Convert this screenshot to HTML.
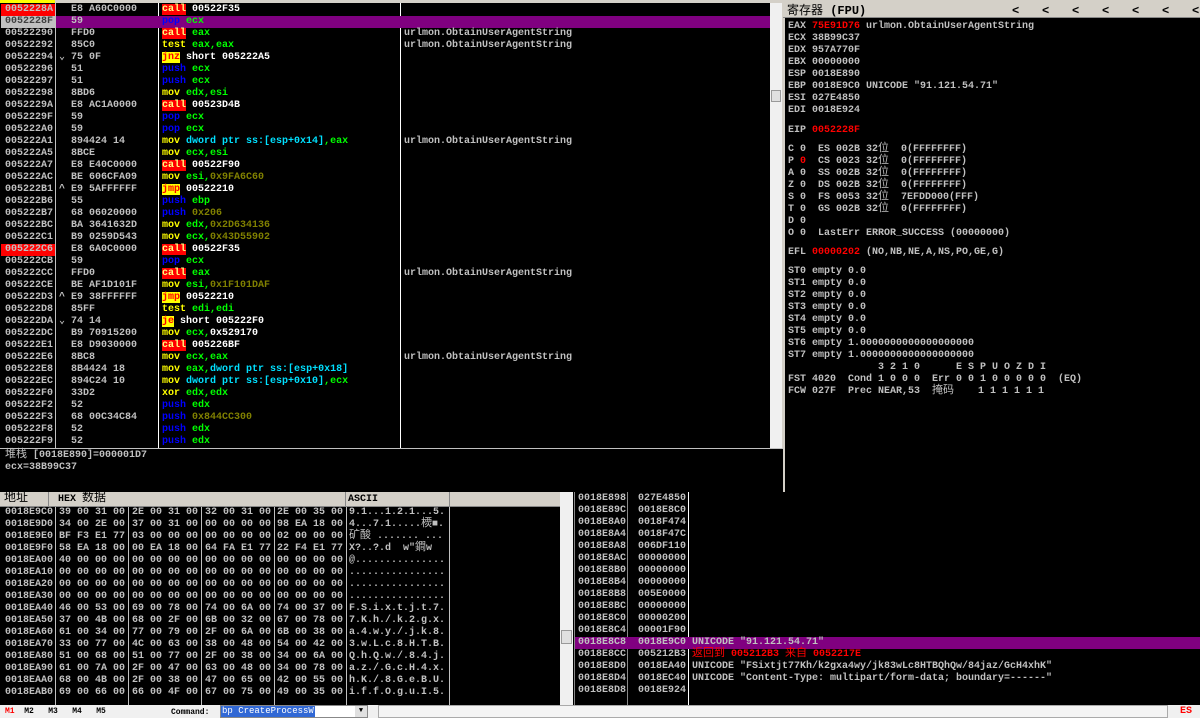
<!DOCTYPE html>
<html><head><meta charset="utf-8"><style>
*{margin:0;padding:0;box-sizing:border-box}
body{width:1200px;height:718px;background:#d4d0c8;position:relative;overflow:hidden;font-family:"Liberation Mono","Noto Sans CJK SC",monospace;font-size:10px;font-weight:bold;color:#c0c0c0}
.a{position:absolute}
.blk{background:#000}
.col{position:absolute;line-height:12px}
.col div{height:12px;white-space:pre;overflow:visible}
.c{background:#f00;color:#ffff80}
.j{background:#ff0;color:#f00}
.p{color:#0000ff}
.m{color:#ff0}
.r{color:#0f0}
.k{color:#808000}
.w{color:#fff}
.d{color:#00e0ff}
.red{color:#f00}
.vl{position:absolute;width:1px;background:#c0c0c0}
.cj{font-family:"Noto Sans CJK SC","WenQuanYi Zen Hei",sans-serif;font-weight:normal;line-height:0;font-size:11px}
.lt{position:absolute;top:4px;color:#000;font-size:12px;line-height:14px}
</style></head><body>
<div class="a" style="left:0;top:0;width:55px;height:3px;background:#ff0"></div>
<div class="a blk" style="left:0;top:3px;width:770px;height:446px"></div>
<div class="vl" style="left:55px;top:3px;height:446px"></div>
<div class="vl" style="left:158px;top:3px;height:446px;background:#fff"></div>
<div class="vl" style="left:400px;top:3px;height:446px;background:#fff"></div>
<div class="a" style="left:1px;top:4px;width:54px;height:12px;background:#f00"></div>
<div class="a" style="left:1px;top:16px;width:54px;height:12px;background:#c0c0c0"></div>
<div class="a" style="left:56px;top:16px;width:714px;height:12px;background:#800080"></div>
<div class="a" style="left:1px;top:244px;width:54px;height:12px;background:#f00"></div>
<div class="col" style="left:5px;top:4px"><div>0052228A</div><div style="color:#404040">0052228F</div><div>00522290</div><div>00522292</div><div>00522294</div><div>00522296</div><div>00522297</div><div>00522298</div><div>0052229A</div><div>0052229F</div><div>005222A0</div><div>005222A1</div><div>005222A5</div><div>005222A7</div><div>005222AC</div><div>005222B1</div><div>005222B6</div><div>005222B7</div><div>005222BC</div><div>005222C1</div><div>005222C6</div><div>005222CB</div><div>005222CC</div><div>005222CE</div><div>005222D3</div><div>005222D8</div><div>005222DA</div><div>005222DC</div><div>005222E1</div><div>005222E6</div><div>005222E8</div><div>005222EC</div><div>005222F0</div><div>005222F2</div><div>005222F3</div><div>005222F8</div><div>005222F9</div></div>
<div class="col" style="left:59px;top:4px"><div> </div><div> </div><div> </div><div> </div><div>⌄</div><div> </div><div> </div><div> </div><div> </div><div> </div><div> </div><div> </div><div> </div><div> </div><div> </div><div>^</div><div> </div><div> </div><div> </div><div> </div><div> </div><div> </div><div> </div><div> </div><div>^</div><div> </div><div>⌄</div></div>
<div class="col" style="left:71px;top:4px"><div>E8 A60C0000</div><div>59</div><div>FFD0</div><div>85C0</div><div>75 0F</div><div>51</div><div>51</div><div>8BD6</div><div>E8 AC1A0000</div><div>59</div><div>59</div><div>894424 14</div><div>8BCE</div><div>E8 E40C0000</div><div>BE 606CFA09</div><div>E9 5AFFFFFF</div><div>55</div><div>68 06020000</div><div>BA 3641632D</div><div>B9 0259D543</div><div>E8 6A0C0000</div><div>59</div><div>FFD0</div><div>BE AF1D101F</div><div>E9 38FFFFFF</div><div>85FF</div><div>74 14</div><div>B9 70915200</div><div>E8 D9030000</div><div>8BC8</div><div>8B4424 18</div><div>894C24 10</div><div>33D2</div><div>52</div><div>68 00C34C84</div><div>52</div><div>52</div></div>
<div class="col" style="left:162px;top:4px"><div><span class="c">call</span> <span class="w">00522F35</span></div><div><span class="p">pop</span> <span class="r">ecx</span></div><div><span class="c">call</span> <span class="r">eax</span></div><div><span class="m">test</span> <span class="r">eax,eax</span></div><div><span class="j">jnz</span> <span class="w">short 005222A5</span></div><div><span class="p">push</span> <span class="r">ecx</span></div><div><span class="p">push</span> <span class="r">ecx</span></div><div><span class="m">mov</span> <span class="r">edx,esi</span></div><div><span class="c">call</span> <span class="w">00523D4B</span></div><div><span class="p">pop</span> <span class="r">ecx</span></div><div><span class="p">pop</span> <span class="r">ecx</span></div><div><span class="m">mov</span> <span class="d">dword ptr ss:[esp+0x14]</span><span class="r">,eax</span></div><div><span class="m">mov</span> <span class="r">ecx,esi</span></div><div><span class="c">call</span> <span class="w">00522F90</span></div><div><span class="m">mov</span> <span class="r">esi,</span><span class="k">0x9FA6C60</span></div><div><span class="j">jmp</span> <span class="w">00522210</span></div><div><span class="p">push</span> <span class="r">ebp</span></div><div><span class="p">push</span> <span class="k">0x206</span></div><div><span class="m">mov</span> <span class="r">edx,</span><span class="k">0x2D634136</span></div><div><span class="m">mov</span> <span class="r">ecx,</span><span class="k">0x43D55902</span></div><div><span class="c">call</span> <span class="w">00522F35</span></div><div><span class="p">pop</span> <span class="r">ecx</span></div><div><span class="c">call</span> <span class="r">eax</span></div><div><span class="m">mov</span> <span class="r">esi,</span><span class="k">0x1F101DAF</span></div><div><span class="j">jmp</span> <span class="w">00522210</span></div><div><span class="m">test</span> <span class="r">edi,edi</span></div><div><span class="j">je</span> <span class="w">short 005222F0</span></div><div><span class="m">mov</span> <span class="r">ecx,</span><span class="w">0x529170</span></div><div><span class="c">call</span> <span class="w">005226BF</span></div><div><span class="m">mov</span> <span class="r">ecx,eax</span></div><div><span class="m">mov</span> <span class="r">eax,</span><span class="d">dword ptr ss:[esp+0x18]</span></div><div><span class="m">mov</span> <span class="d">dword ptr ss:[esp+0x10]</span><span class="r">,ecx</span></div><div><span class="m">xor</span> <span class="r">edx,edx</span></div><div><span class="p">push</span> <span class="r">edx</span></div><div><span class="p">push</span> <span class="k">0x844CC300</span></div><div><span class="p">push</span> <span class="r">edx</span></div><div><span class="p">push</span> <span class="r">edx</span></div></div>
<div class="col" style="left:404px;top:28px"><div>urlmon.ObtainUserAgentString</div><div>urlmon.ObtainUserAgentString</div></div>
<div class="col" style="left:404px;top:136px"><div>urlmon.ObtainUserAgentString</div></div>
<div class="col" style="left:404px;top:268px"><div>urlmon.ObtainUserAgentString</div></div>
<div class="col" style="left:404px;top:352px"><div>urlmon.ObtainUserAgentString</div></div>
<div class="a" style="left:770px;top:3px;width:12px;height:446px;background:#f0f0f0"></div>
<div class="a" style="left:771px;top:90px;width:10px;height:12px;background:#e0e0e0;border:1px solid #999"></div>
<div class="a blk" style="left:0;top:449px;width:783px;height:43px"></div>
<div class="a" style="left:0;top:448px;width:783px;height:1px;background:#c0c0c0"></div>
<div class="col" style="left:5px;top:450px"><div><span class="cj">堆栈</span> [0018E890]=000001D7</div><div>ecx=38B99C37</div></div>
<div class="a" style="left:783px;top:3px;width:417px;height:15px;background:#d4d0c8;border-bottom:1px solid #888"></div>
<div class="a blk" style="left:785px;top:18px;width:415px;height:474px"></div>
<div class="lt" style="left:787px"><span class="cj" style="font-size:12px">寄存器</span> (FPU)</div>
<div class="lt" style="left:1012px">&lt;</div><div class="lt" style="left:1042px">&lt;</div><div class="lt" style="left:1072px">&lt;</div><div class="lt" style="left:1102px">&lt;</div><div class="lt" style="left:1132px">&lt;</div><div class="lt" style="left:1162px">&lt;</div><div class="lt" style="left:1192px">&lt;</div>
<div class="col" style="left:788px;top:21px"><div>EAX <span class="red">75E91D76</span> urlmon.ObtainUserAgentString</div><div>ECX 38B99C37</div><div>EDX 957A770F</div><div>EBX 00000000</div><div>ESP 0018E890</div><div>EBP 0018E9C0 UNICODE "91.121.54.71"</div><div>ESI 027E4850</div><div>EDI 0018E924</div><div style="height:8px"></div><div>EIP <span class="red">0052228F</span></div><div style="height:7px"></div><div>C 0  ES 002B 32<span class="cj">位</span>  0(FFFFFFFF)</div><div>P <span class="red">0</span>  CS 0023 32<span class="cj">位</span>  0(FFFFFFFF)</div><div>A 0  SS 002B 32<span class="cj">位</span>  0(FFFFFFFF)</div><div>Z 0  DS 002B 32<span class="cj">位</span>  0(FFFFFFFF)</div><div>S 0  FS 0053 32<span class="cj">位</span>  7EFDD000(FFF)</div><div>T 0  GS 002B 32<span class="cj">位</span>  0(FFFFFFFF)</div><div>D 0</div><div>O 0  LastErr ERROR_SUCCESS (00000000)</div><div style="height:7px"></div><div>EFL <span class="red">00000202</span> (NO,NB,NE,A,NS,PO,GE,G)</div><div style="height:7px"></div><div>ST0 empty 0.0</div><div>ST1 empty 0.0</div><div>ST2 empty 0.0</div><div>ST3 empty 0.0</div><div>ST4 empty 0.0</div><div>ST5 empty 0.0</div><div>ST6 empty 1.0000000000000000000</div><div>ST7 empty 1.0000000000000000000</div><div>               3 2 1 0      E S P U O Z D I</div><div>FST 4020  Cond 1 0 0 0  Err 0 0 1 0 0 0 0 0  (EQ)</div><div>FCW 027F  Prec NEAR,53  <span class="cj">掩码</span>    1 1 1 1 1 1</div></div>
<div class="a" style="left:0;top:492px;width:560px;height:15px;background:#d4d0c8;border-bottom:1px solid #888"></div>
<div class="vl" style="left:48px;top:492px;height:15px;background:#888"></div>
<div class="vl" style="left:345px;top:492px;height:15px;background:#888"></div>
<div class="vl" style="left:449px;top:492px;height:15px;background:#888"></div>
<div class="a" style="left:4px;top:492px;color:#000;line-height:15px"><span class="cj" style="font-size:12px">地址</span></div>
<div class="a" style="left:58px;top:492px;color:#000;line-height:15px">HEX <span class="cj" style="font-size:12px">数据</span></div>
<div class="a" style="left:348px;top:492px;color:#000;line-height:15px">ASCII</div>
<div class="a blk" style="left:0;top:507px;width:560px;height:198px"></div>
<div class="vl" style="left:55px;top:507px;height:198px"></div>
<div class="vl" style="left:128px;top:507px;height:198px"></div>
<div class="vl" style="left:201px;top:507px;height:198px"></div>
<div class="vl" style="left:274px;top:507px;height:198px"></div>
<div class="vl" style="left:346px;top:507px;height:198px"></div>
<div class="vl" style="left:449px;top:507px;height:198px"></div>
<div class="col" style="left:5px;top:507px"><div>0018E9C0</div><div>0018E9D0</div><div>0018E9E0</div><div>0018E9F0</div><div>0018EA00</div><div>0018EA10</div><div>0018EA20</div><div>0018EA30</div><div>0018EA40</div><div>0018EA50</div><div>0018EA60</div><div>0018EA70</div><div>0018EA80</div><div>0018EA90</div><div>0018EAA0</div><div>0018EAB0</div></div>
<div class="col" style="left:59px;top:507px"><div>39 00 31 00</div><div>34 00 2E 00</div><div>BF F3 E1 77</div><div>58 EA 18 00</div><div>40 00 00 00</div><div>00 00 00 00</div><div>00 00 00 00</div><div>00 00 00 00</div><div>46 00 53 00</div><div>37 00 4B 00</div><div>61 00 34 00</div><div>33 00 77 00</div><div>51 00 68 00</div><div>61 00 7A 00</div><div>68 00 4B 00</div><div>69 00 66 00</div></div>
<div class="col" style="left:132px;top:507px"><div>2E 00 31 00</div><div>37 00 31 00</div><div>03 00 00 00</div><div>00 EA 18 00</div><div>00 00 00 00</div><div>00 00 00 00</div><div>00 00 00 00</div><div>00 00 00 00</div><div>69 00 78 00</div><div>68 00 2F 00</div><div>77 00 79 00</div><div>4C 00 63 00</div><div>51 00 77 00</div><div>2F 00 47 00</div><div>2F 00 38 00</div><div>66 00 4F 00</div></div>
<div class="col" style="left:205px;top:507px"><div>32 00 31 00</div><div>00 00 00 00</div><div>00 00 00 00</div><div>64 FA E1 77</div><div>00 00 00 00</div><div>00 00 00 00</div><div>00 00 00 00</div><div>00 00 00 00</div><div>74 00 6A 00</div><div>6B 00 32 00</div><div>2F 00 6A 00</div><div>38 00 48 00</div><div>2F 00 38 00</div><div>63 00 48 00</div><div>47 00 65 00</div><div>67 00 75 00</div></div>
<div class="col" style="left:277px;top:507px"><div>2E 00 35 00</div><div>98 EA 18 00</div><div>02 00 00 00</div><div>22 F4 E1 77</div><div>00 00 00 00</div><div>00 00 00 00</div><div>00 00 00 00</div><div>00 00 00 00</div><div>74 00 37 00</div><div>67 00 78 00</div><div>6B 00 38 00</div><div>54 00 42 00</div><div>34 00 6A 00</div><div>34 00 78 00</div><div>42 00 55 00</div><div>49 00 35 00</div></div>
<div class="col" style="left:349px;top:507px"><div>9.1...1.2.1...5.</div><div>4...7.1.....<span class="cj">樮</span>■.</div><div><span class="cj">矿酸</span> ....... ...</div><div>X?..?.d  w"<span class="cj">鐧</span>w</div><div>@...............</div><div>................</div><div>................</div><div>................</div><div>F.S.i.x.t.j.t.7.</div><div>7.K.h./.k.2.g.x.</div><div>a.4.w.y./.j.k.8.</div><div>3.w.L.c.8.H.T.B.</div><div>Q.h.Q.w./.8.4.j.</div><div>a.z./.G.c.H.4.x.</div><div>h.K./.8.G.e.B.U.</div><div>i.f.f.O.g.u.I.5.</div></div>
<div class="a" style="left:560px;top:492px;width:13px;height:213px;background:#f0f0f0"></div>
<div class="a" style="left:561px;top:630px;width:11px;height:14px;background:#e0e0e0;border:1px solid #999"></div>
<div class="a blk" style="left:573px;top:492px;width:627px;height:213px"></div>
<div class="vl" style="left:574px;top:492px;height:213px;background:#888"></div>
<div class="vl" style="left:627px;top:492px;height:213px;background:#888"></div>
<div class="vl" style="left:688px;top:492px;height:213px;background:#fff"></div>
<div class="a" style="left:575px;top:637px;width:625px;height:12px;background:#800080"></div>
<div class="col" style="left:578px;top:493px"><div>0018E898</div><div>0018E89C</div><div>0018E8A0</div><div>0018E8A4</div><div>0018E8A8</div><div>0018E8AC</div><div>0018E8B0</div><div>0018E8B4</div><div>0018E8B8</div><div>0018E8BC</div><div>0018E8C0</div><div>0018E8C4</div><div>0018E8C8</div><div>0018E8CC</div><div>0018E8D0</div><div>0018E8D4</div><div>0018E8D8</div></div>
<div class="col" style="left:638px;top:493px"><div>027E4850</div><div>0018E8C0</div><div>0018F474</div><div>0018F47C</div><div>006DF110</div><div>00000000</div><div>00000000</div><div>00000000</div><div>005E0000</div><div>00000000</div><div>00000200</div><div>00001F90</div><div>0018E9C0</div><div>005212B3</div><div>0018EA40</div><div>0018EC40</div><div>0018E924</div></div>
<div class="col" style="left:692px;top:637px"><div>UNICODE "91.121.54.71"</div><div class="red"><span class="cj">返回到</span> 005212B3 <span class="cj">来自</span> 0052217E</div><div>UNICODE "FSixtjt77Kh/k2gxa4wy/jk83wLc8HTBQhQw/84jaz/GcH4xhK"</div><div>UNICODE "Content-Type: multipart/form-data; boundary=------"</div></div>
<div class="a" style="left:0;top:705px;width:1200px;height:13px;background:#f0f0f0"></div>
<div class="a" style="left:5px;top:706px;font-size:8px;line-height:11px;color:#000;white-space:pre"><span class="red">M1</span>  M2   M3   M4   M5</div>
<div class="a" style="left:171px;top:707px;font-size:8px;line-height:11px;color:#000">Command:</div>
<div class="a" style="left:220px;top:705px;width:148px;height:13px;background:#fff;border:1px solid #888"></div>
<div class="a" style="left:221px;top:706px;height:11px;background:#3168d5;color:#fff;font-size:9px;line-height:11px;font-weight:normal;padding:0 1px;white-space:nowrap">bp CreateProcessW</div>
<div class="a" style="left:355px;top:706px;width:12px;height:11px;background:#e0e0e0;font-size:7px;color:#000;text-align:center;line-height:11px">▼</div>
<div class="a" style="left:378px;top:705px;width:790px;height:13px;border:1px solid #aaa;background:#f4f4f4"></div>
<div class="a red" style="left:1180px;top:706px;line-height:11px">ES</div>
</body></html>
